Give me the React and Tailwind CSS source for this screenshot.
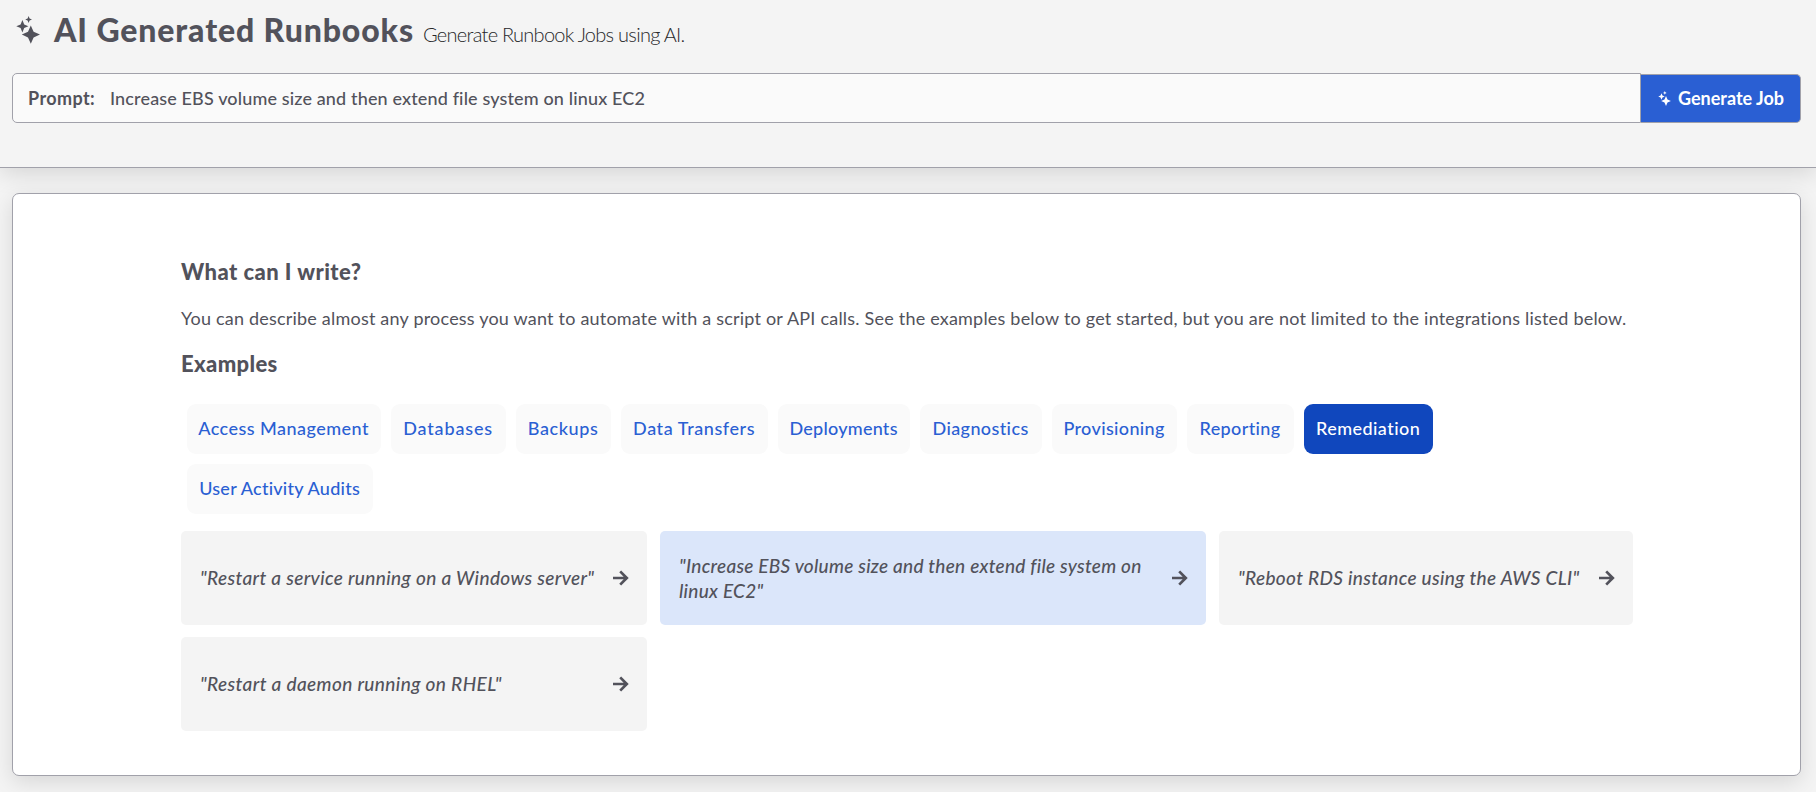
const examples = [
  {
    text: '"Restart a service running on a Windows server"',
    tracking: "tracking-[0.36px]",
  },
  {
    text: '"Increase EBS volume size and then extend file system on linux EC2"',
    tracking: "tracking-[0.26px]",
    selected: true,
  },
  {
    text: '"Reboot RDS instance using the AWS CLI"',
    tracking: "tracking-[0.34px]",
  },
  {
    text: '"Restart a daemon running on RHEL"',
    tracking: "tracking-[0.38px]",
  },
];

const categoryRows = [
  [
    { name: "Access Management", size: "w-[194px] tracking-[0.47px]" },
    { name: "Databases", size: "w-[115px] tracking-[0.85px]" },
    { name: "Backups", size: "w-[95px] tracking-[0.6px]" },
    { name: "Data Transfers", size: "w-[147px] tracking-[0.58px]" },
    { name: "Deployments", size: "w-[132px] tracking-[0.25px]" },
    { name: "Diagnostics", size: "w-[122px] tracking-[0.39px]" },
    { name: "Provisioning", size: "w-[125px] tracking-[0.36px]" },
    { name: "Reporting", size: "w-[107px] tracking-[0.38px]" },
    { name: "Remediation", size: "w-[129px] tracking-[0.44px]", active: true },
  ],
  [{ name: "User Activity Audits", size: "w-[186px] tracking-[0.24px]" }],
];

function Sparkles({ className }) {
  return (
    <svg viewBox="0 0 24 28" fill="currentColor" className={className} aria-hidden="true">
      <path d="M12.6 0L13.6 2.5L16 3.5L13.6 4.5L12.6 7L11.6 4.5L9.2 3.5L11.6 2.5Z" />
      <path d="M6.4 4L8.2 8.4L12.4 10.2L8.2 12L6.4 16.4L4.6 12L0.3 10.2L4.6 8.4Z" />
      <path d="M14.8 9.4L17.6 15.8L24 18.6L17.6 21.4L14.8 27.8L12 21.4L5.8 18.6L12 15.8Z" />
    </svg>
  );
}

function ArrowRight() {
  return (
    <svg
      viewBox="0 0 16 16"
      fill="none"
      stroke="currentColor"
      strokeWidth="2.7"
      className="h-4 w-4 shrink-0"
      aria-hidden="true"
    >
      <path d="M0 8H14M7.2 1.4L13.8 8L7.2 14.6" />
    </svg>
  );
}

function Category({ name, size, active }) {
  return (
    <button
      className={`flex h-[50px] items-center justify-center rounded-[9px] pb-px whitespace-nowrap font-medium ${size} ${
        active ? "bg-[#1047bd] text-white" : "bg-[#fafafa] text-[#2a5fd3]"
      }`}
    >
      {name}
    </button>
  );
}

function Example({ text, tracking, selected }) {
  return (
    <button
      className={`flex h-[94px] items-center justify-between rounded-[5px] pr-[18px] pb-px pl-[19px] text-left text-[19px] leading-[25px] font-medium italic ${tracking} ${
        selected ? "bg-[#dbe6fa]" : "bg-[#f4f4f4]"
      }`}
    >
      <span className={selected ? "w-[480px]" : "whitespace-nowrap"}>{text}</span>
      <ArrowRight />
    </button>
  );
}

export default function App() {
  return (
    <div className="flex h-[792px] w-[1816px] flex-col overflow-hidden bg-[#f4f4f4] font-['Lato',sans-serif] text-[18px] text-[#52525b]">
      <header className="h-[168px] shrink-0 border-b border-[#a1a1aa] pr-[15px] pl-3 shadow-[0_6px_22px_rgba(0,0,0,0.12)]">
        <div className="flex h-[73px] items-start pl-1">
          <Sparkles className="mt-4 h-7 w-6" />
          <h1 className="mt-[10px] ml-[14px] w-[369px] text-[32px] leading-[40px] font-black tracking-[0.88px] whitespace-nowrap">
            AI Generated Runbooks
          </h1>
          <p className="mt-[19px] text-[20px] leading-[30px] font-light tracking-[-0.72px] whitespace-nowrap text-[#27272a]">
            Generate Runbook Jobs using AI.
          </p>
        </div>
        <div className="flex items-end">
          <div className="flex h-[50px] flex-1 items-center rounded-l-[5px] border border-[#a1a1aa] bg-[#fafafa] pl-[15px]">
            <span className="w-[82px] font-bold tracking-[0.4px]">Prompt:</span>
            <span className="font-medium tracking-[0.14px]">
              Increase EBS volume size and then extend file system on linux EC2
            </span>
          </div>
          <button className="flex h-[49px] w-[160px] items-center rounded-r-[5px] border border-l-0 border-[#a1a1aa] bg-[#2a5fd3] pl-[17px] font-bold whitespace-nowrap text-white">
            <Sparkles className="mr-[7px] h-[15px] w-[13px]" />
            Generate Job
          </button>
        </div>
      </header>

      <main className="mt-[25px] mr-[15px] ml-3 h-[583px] rounded-[7px] border border-[#a1a1aa] bg-white pt-16 pr-[167px] pl-[168px] shadow-[0_6px_22px_rgba(0,0,0,0.12)]">
        <h2 className="text-[22px] leading-[28px] font-black tracking-[0.45px]">What can I write?</h2>
        <p className="mt-[18px] leading-[28px] tracking-[0.207px] whitespace-nowrap">
          You can describe almost any process you want to automate with a script or API calls. See the examples below to get started, but you are not limited to the integrations listed below.
        </p>
        <h2 className="mt-[18px] text-[22px] leading-[28px] font-black tracking-[0.35px]">Examples</h2>
        <div className="mt-[26px] flex flex-col gap-[10px] pl-[5.6px]">
          {categoryRows.map((row, i) => (
            <div key={i} className="flex gap-[10px]">
              {row.map((c) => (
                <Category key={c.name} {...c} />
              ))}
            </div>
          ))}
        </div>
        <div className="mt-[17px] grid grid-cols-[466px_546px_414px] gap-x-[13px] gap-y-3">
          {examples.map((e) => (
            <Example key={e.text} {...e} />
          ))}
        </div>
      </main>
    </div>
  );
}
